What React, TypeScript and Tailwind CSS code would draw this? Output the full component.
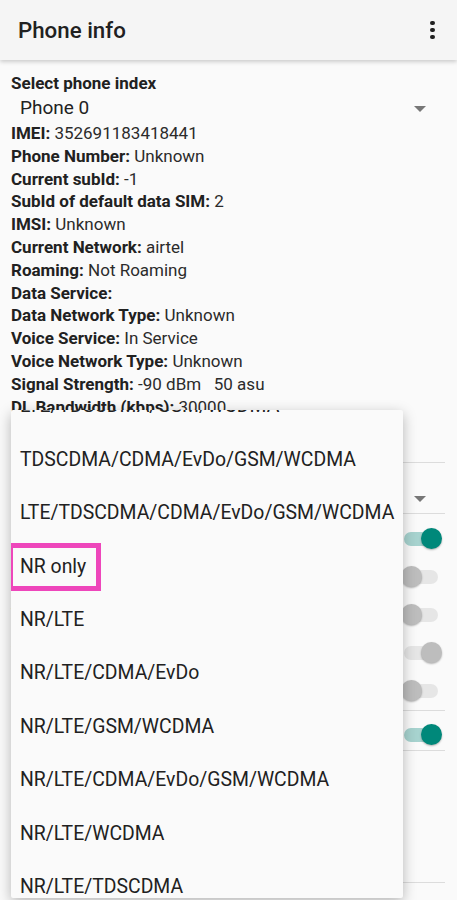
import React from 'react'

const font = { fontFamily: 'Roboto, "Noto Sans", sans-serif' }

const infoRows: [string, string][] = [
  ['IMEI:', '352691183418441'],
  ['Phone Number:', 'Unknown'],
  ['Current subId:', '-1'],
  ['SubId of default data SIM:', '2'],
  ['IMSI:', 'Unknown'],
  ['Current Network:', 'airtel'],
  ['Roaming:', 'Not Roaming'],
  ['Data Service:', ''],
  ['Data Network Type:', 'Unknown'],
  ['Voice Service:', 'In Service'],
  ['Voice Network Type:', 'Unknown'],
  ['Signal Strength:', '-90 dBm\u00a0\u00a0\u00a050 asu'],
  ['DL Bandwidth (kbps):', '30000'],
  ['UL Bandwidth (kbps):', '15000'],
  ['Data Limit:', ''],
]

const networkTypes = [
  'LTE/TDSCDMA/GSM/WCDMA',
  'TDSCDMA/CDMA/EvDo/GSM/WCDMA',
  'LTE/TDSCDMA/CDMA/EvDo/GSM/WCDMA',
  'NR only',
  'NR/LTE',
  'NR/LTE/CDMA/EvDo',
  'NR/LTE/GSM/WCDMA',
  'NR/LTE/CDMA/EvDo/GSM/WCDMA',
  'NR/LTE/WCDMA',
  'NR/LTE/TDSCDMA',
]

type SwitchState = 'on' | 'off' | 'disabledOn'

function Switch({ state }: { state: SwitchState }) {
  const on = state !== 'off'
  return (
    <div className="relative w-[41px] h-[21px]">
      <div
        className={`absolute left-[3.5px] top-[3.5px] w-[34px] h-[14px] rounded-full ${
          state === 'on' ? 'bg-[#a7d3cf]' : 'bg-[#e6e6e6]'
        }`}
      />
      <div
        className={`absolute top-0 w-[21px] h-[21px] rounded-full shadow-[0_1px_2px_rgba(0,0,0,0.3)] ${
          on ? 'right-0' : 'left-0'
        } ${state === 'on' ? 'bg-[#00887a]' : 'bg-[#bdbdbd]'}`}
      />
    </div>
  )
}

function SwitchRow({ label, state }: { label: string; state: SwitchState }) {
  return (
    <div className="h-[38px] flex items-center justify-between pl-[11px] pr-[15.5px]">
      <span className="text-[17px] text-[#212121]">{label}</span>
      <Switch state={state} />
    </div>
  )
}

function Divider() {
  return <div className="h-px bg-[#dcdcdc] ml-[11px] mr-[12px]" />
}

function Arrow() {
  return (
    <svg width="12" height="6" viewBox="0 0 12 6">
      <path d="M0 0 L12 0 L6 6 Z" fill="#777" />
    </svg>
  )
}

export default function App() {
  return (
    <div className="relative w-[457px] h-[900px] overflow-hidden bg-[#fafafa]" style={font}>
      {/* App bar */}
      <header className="relative z-10 h-[60px] bg-[#f5f5f5] flex items-center justify-between pl-[18px] pr-[22.5px] shadow-[0_2px_4px_rgba(0,0,0,0.18)]">
        <h1 className="text-[22.3px] font-medium text-[#212121] leading-none">Phone info</h1>
        <div className="flex flex-col gap-[2.6px] items-center">
          <span className="w-[4.5px] h-[4.5px] rounded-full bg-[#212121]" />
          <span className="w-[4.5px] h-[4.5px] rounded-full bg-[#212121]" />
          <span className="w-[4.5px] h-[4.5px] rounded-full bg-[#212121]" />
        </div>
      </header>

      {/* Info list */}
      <div className="pt-[12px] text-[17px] text-[#212121]">
        <div className="px-[11px] h-[23px] leading-[23px] font-bold">Select phone index</div>
        <div className="h-[27px] flex items-center justify-between pl-[20px] pr-[31px]">
          <span className="text-[19px] text-[#222]">Phone 0</span>
          <Arrow />
        </div>
        {infoRows.map(([label, value]) => (
          <div key={label} className="px-[11px] h-[22.8px] leading-[22.8px] whitespace-nowrap">
            <span className="font-bold">{label}</span> <span className="text-[#2b2b2b]">{value}</span>
          </div>
        ))}
        <div className="-mt-[2px]" />
        <Divider />
        <div className="h-[22px] leading-[22px] px-[11px] font-bold">Set Preferred Network Type:</div>
        <div className="h-[28px] flex items-center justify-between pl-[20px] pr-[31px]">
          <span className="text-[19px]">NR/LTE/GSM/WCDMA</span>
          <Arrow />
        </div>
        <Divider />
        <div className="pt-[6px]">
          <SwitchRow label="Mobile Radio Power" state="on" />
          <SwitchRow label="VoLTE Provisioned" state="off" />
          <SwitchRow label="Video Calling Provisioned" state="off" />
          <SwitchRow label="Wifi Calling Provisioned" state="disabledOn" />
          <SwitchRow label="EAB/Presence Provisioned" state="off" />
        </div>
        <Divider />
        <div className="pt-[9px] h-[39px] flex items-center justify-between pl-[11px] pr-[15.5px]">
          <span>Enable DSDS</span>
          <Switch state="on" />
        </div>
        <Divider />
        <div className="h-[131px]" />
        <Divider />
      </div>

      {/* Network type dropdown popup */}
      <div className="absolute left-[11px] top-[410px] w-[392px] h-[488px] overflow-hidden bg-[#fafafa] rounded-[2px] shadow-[0_4px_14px_rgba(0,0,0,0.28)] z-20">
        <ul className="-mt-[30.7px]">
          {networkTypes.map((t) => (
            <li key={t} className="relative h-[53.4px] flex items-center pl-[9px] text-[19.4px] text-[#212121] whitespace-nowrap">
              {t === 'NR only' && (
                <span className="absolute left-[-3px] top-[4px] w-[93px] h-[48px] border-[5px] border-[#ee46bb]" />
              )}
              <span className="relative">{t}</span>
            </li>
          ))}
        </ul>
      </div>
    </div>
  )
}
